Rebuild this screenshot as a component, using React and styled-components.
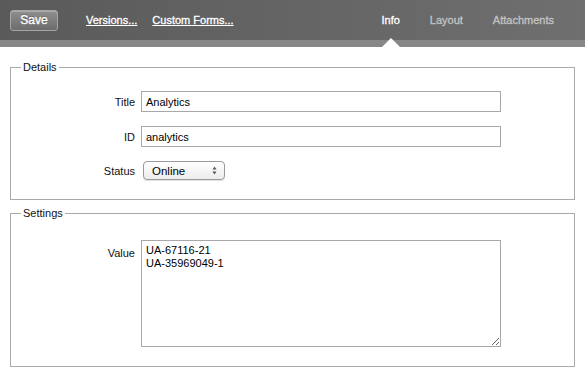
import React from "react";
import styled, { createGlobalStyle } from "styled-components";

const Global = createGlobalStyle`
  html, body { margin: 0; padding: 0; background: #fff; }
  body { font-family: "Liberation Sans", Arial, Helvetica, sans-serif; font-size: 11px; color: #111; }
`;

const Header = styled.header`
  height: 40px;
  border-bottom: 7px solid #878787;
  background: linear-gradient(to right, #5a5a5a, #6f6f6f);
  display: flex;
  align-items: center;
  padding: 0 31px 0 10px;
`;

const SaveButton = styled.button`
  width: 48px;
  height: 21px;
  margin: 0 28px 0 0;
  padding: 0;
  border: 1px solid #a6a6a6;
  border-radius: 3px;
  background: linear-gradient(#8f8f8f, #6c6c6c);
  box-shadow: inset 0 1px 0 rgba(255,255,255,0.25);
  color: #fff;
  font-family: inherit;
  font-size: 12px;
  font-weight: normal;
  -webkit-text-stroke: 0.35px #fff;
  text-shadow: 0 -1px 0 rgba(0,0,0,0.4);
`;

const NavLink = styled.a`
  color: #fff;
  font-size: 11px;
  font-weight: normal;
  -webkit-text-stroke: 0.3px #fff;
  text-decoration: underline;
  margin-right: ${(p) => p.$gap || 0}px;
  cursor: pointer;
`;

const Spacer = styled.div`
  flex: 1;
`;

const Tabs = styled.nav`
  display: flex;
  gap: 30px;
  height: 40px;
`;

const Tab = styled.div`
  position: relative;
  display: flex;
  align-items: center;
  font-size: 11px;
  font-weight: normal;
  color: ${(p) => (p.$active ? "#fff" : "#c4c4c4")};
  -webkit-text-stroke: 0.3px ${(p) => (p.$active ? "#fff" : "#c4c4c4")};
  &::after {
    content: "";
    display: ${(p) => (p.$active ? "block" : "none")};
    position: absolute;
    left: 50%;
    bottom: -7px;
    transform: translateX(-50%);
    border-left: 9px solid transparent;
    border-right: 9px solid transparent;
    border-bottom: 9px solid #fff;
  }
`;

const Main = styled.main`
  padding: 14px 10px 0 10px;
  display: flex;
  flex-direction: column;
  gap: 7px;
`;

const Fieldset = styled.fieldset`
  margin: 0;
  border: 1px solid #aaaaaa;
  padding: ${(p) => p.$pt}px 0 ${(p) => p.$pb}px 0;
  min-width: 0;
`;

const Legend = styled.legend`
  margin-left: 10px;
  padding: 0 2px;
  font-size: 11px;
  color: #111;
`;

const Form = styled.div`
  display: grid;
  grid-template-columns: 124px 360px;
  column-gap: 6px;
  row-gap: 14px;
  align-items: center;
`;

const Label = styled.label`
  text-align: right;
  font-size: 11px;
  color: #111;
  align-self: ${(p) => (p.$top ? "start" : "center")};
  padding-top: ${(p) => (p.$top ? 7 : 0)}px;
`;

const TextInput = styled.input`
  box-sizing: border-box;
  width: 360px;
  height: 21px;
  border: 1px solid #a8a8a8;
  padding: 0 4px;
  font-family: inherit;
  font-size: 11px;
  color: #000;
  outline: none;
`;

const SelectWrap = styled.div`
  position: relative;
  width: 82px;
  height: 19px;
  margin-left: 2px;
`;

const Select = styled.select`
  appearance: none;
  -webkit-appearance: none;
  box-sizing: border-box;
  width: 82px;
  height: 19px;
  border: 1px solid #9a9a9a;
  border-radius: 4px;
  background: linear-gradient(#ffffff, #ececec);
  box-shadow: 0 1px 1px rgba(0,0,0,0.12);
  padding: 0 0 0 8px;
  font-family: inherit;
  font-size: 11.5px;
  color: #000;
  outline: none;
`;

const Arrows = styled.svg`
  position: absolute;
  right: 8px;
  top: 5px;
  pointer-events: none;
`;

const TextArea = styled.textarea`
  box-sizing: border-box;
  width: 360px;
  height: 107px;
  border: 1px solid #a8a8a8;
  padding: 3px 4px;
  font-family: inherit;
  font-size: 11px;
  line-height: 13px;
  color: #000;
  outline: none;
  resize: both;
`;

export default function App() {
  return (
    <>
      <Global />
      <Header>
        <SaveButton>Save</SaveButton>
        <NavLink $gap={15}>Versions...</NavLink>
        <NavLink>Custom Forms...</NavLink>
        <Spacer />
        <Tabs>
          <Tab $active>Info</Tab>
          <Tab>Layout</Tab>
          <Tab>Attachments</Tab>
        </Tabs>
      </Header>
      <Main>
        <Fieldset $pt={18} $pb={19}>
          <Legend>Details</Legend>
          <Form>
            <Label>Title</Label>
            <TextInput defaultValue="Analytics" />
            <Label>ID</Label>
            <TextInput defaultValue="analytics" />
            <Label>Status</Label>
            <SelectWrap>
              <Select defaultValue="Online">
                <option>Online</option>
                <option>Offline</option>
              </Select>
              <Arrows width="5" height="9" viewBox="0 0 5 9">
                <path d="M2.5 0.5 L4.5 3.5 H0.5 Z M2.5 8.5 L4.5 5.5 H0.5 Z" fill="#555" />
              </Arrows>
            </SelectWrap>
          </Form>
        </Fieldset>
        <Fieldset $pt={21} $pb={19}>
          <Legend>Settings</Legend>
          <Form>
            <Label $top>Value</Label>
            <TextArea defaultValue={"UA-67116-21\nUA-35969049-1"} />
          </Form>
        </Fieldset>
      </Main>
    </>
  );
}
